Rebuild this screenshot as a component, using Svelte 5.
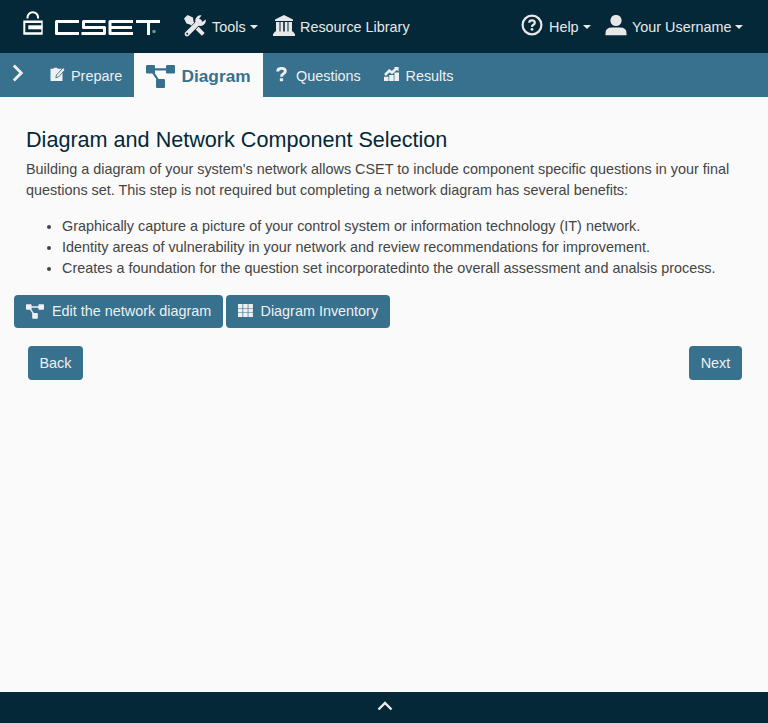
<script>
  const benefits = [
    'Graphically capture a picture of your control system or information technology (IT) network.',
    'Identity areas of vulnerability in your network and review recommendations for improvement.',
    'Creates a foundation for the question set incorporatedinto the overall assessment and analsis process.'
  ];
</script>

{#snippet nodes(w, h)}
  <svg width={w} height={h} viewBox="0 0 29 23">
    <path d="M5 4.300H24M5 4.300L14 18" fill="none" stroke="currentColor" stroke-width="2.200" />
    <rect x="0" y="0" width="9" height="8.500" rx="1.200" />
    <rect x="20" y="0" width="9" height="8.500" rx="1.200" />
    <rect x="10" y="14" width="9" height="9" rx="1.200" />
  </svg>
{/snippet}

<div class="app">
  <header>
    <a class="brand" href="#home" aria-label="CSET">
      <svg width="138" height="26" viewBox="0 0 138 26">
        <path d="M4.500 7.500V6.500a5.300 5.300 0 0 1 10.600 0V7.500" fill="none" stroke="#fff" stroke-width="2" />
        <path fill="#fff" fill-rule="evenodd" d="M.3 9.500h19.400v14.200H.3zM2.300 12v9.200h16V12z" />
        <path fill="#fff" d="M5.300 14.300h14v4h-14z" />
        <g fill="none" stroke="#fff" stroke-width="3" stroke-linejoin="round">
          <path d="M56 10.500H33.500V22.500H56" />
          <path d="M82.500 10.500H60.500V16.400H81.500V22.500H58.500" />
          <path d="M110 10.500H87V22.500H110M87 16.500H109" />
          <path d="M113 10.500H137M125.500 10.500V24" />
        </g>
        <circle cx="131" cy="20.500" r="1.700" fill="#7d909a" />
      </svg>
    </a>
    <a class="tools" href="#tools">
      <svg width="22" height="22" viewBox="0 0 22 22">
        <path d="M0 3.500L3.500 0L9 2.500L9.500 6.500L13 10L9.500 13L6 9.500L2.500 8.500z" />
        <path d="M13 13L19.300 19.300" stroke="currentColor" stroke-width="4" />
        <path d="M5 17L14.500 7.500" stroke="#042838" stroke-width="6" />
        <path d="M3 19L15.500 6.500" stroke="currentColor" stroke-width="4.600" stroke-linecap="round" />
        <path d="M17.500.4A5.300 5.300 0 1 0 21.700 4.500L18.500 6.800L15.500 6.300L15.200 3.500z" />
        <circle cx="3.200" cy="18.800" r="1" fill="#042838" />
      </svg>
      <span>Tools</span><i class="caret"></i>
    </a>
    <a class="library" href="#library">
      <svg width="22" height="21" viewBox="0 0 22 21">
        <path d="M11 0L20 4.500V6H2V4.500zM3 7h3.500v9.500H3zM7.500 7h2.700v9.500H7.500zM11.800 7h2.700v9.500h-2.700zM15.500 7H19v9.500h-3.500zM2 16.500h18l2 2.800V21H0v-1.700z" />
      </svg>
      <span>Resource Library</span>
    </a>
    <a class="help" href="#help">
      <svg width="22" height="22" viewBox="0 0 22 22">
        <circle cx="11" cy="11" r="9.400" fill="none" stroke="currentColor" stroke-width="2.200" />
        <path d="M8.200 8.800Q8.200 6.300 11 6.300T13.800 8.700Q13.800 10 12.400 10.800Q11 11.500 11 13" fill="none" stroke="currentColor" stroke-width="2.200" />
        <circle cx="11" cy="15.300" r="1.400" />
      </svg>
      <span>Help</span><i class="caret"></i>
    </a>
    <a class="user" href="#account">
      <svg width="22" height="21" viewBox="0 0 22 21">
        <circle cx="11" cy="5.500" r="5.600" />
        <path d="M.5 20.300V18Q.5 12.500 7 12.500H15Q21.500 12.500 21.500 18V20.300z" />
      </svg>
      <span>Your Username</span><i class="caret"></i>
    </a>
  </header>

  <nav>
    <button class="expand" aria-label="Expand">
      <svg width="12" height="18" viewBox="0 0 12 18"><path d="M1.800 1.500L9.300 9L1.800 16.500" fill="none" stroke="currentColor" stroke-width="2.800" /></svg>
    </button>
    <a class="prepare" href="#prepare">
      <svg width="15" height="15" viewBox="0 0 15 15">
        <path d="M.5 1.800h3L4 .8h3.200l.5 1h4.800V14H.5z" />
        <path d="M13 .8L6.500 8L5.800 10.700L8.500 10L14.600 3.200" fill="#f0f0f0" stroke="#37718e" stroke-width=".9" />
      </svg>
      <span>Prepare</span>
    </a>
    <a class="diagram" href="#diagram">{@render nodes(29, 23)}<span>Diagram</span></a>
    <a class="questions" href="#questions">
      <svg width="11" height="15" viewBox="0 0 11 15">
        <path d="M1.700 4.600Q1.700 1.400 5.500 1.400T9.300 4.200Q9.300 5.800 7.500 6.800Q5.500 7.900 5.500 9.800" fill="none" stroke="currentColor" stroke-width="2.900" />
        <rect x="3.800" y="11.200" width="3.300" height="3" rx=".6" />
      </svg>
      <span>Questions</span>
    </a>
    <a class="results" href="#results">
      <svg width="15" height="14" viewBox="0 0 15 14">
        <path d="M0 9.800h4.500V14H0zM5.200 8h4.500v6H5.200zM10.400 5.500H15V14h-4.600z" />
        <path d="M1 8L5.300 3.600L8 5.500L12.500 1.500" fill="none" stroke="currentColor" stroke-width="2.600" />
        <path d="M9.800 0H14.600V4.600z" />
      </svg>
      <span>Results</span>
    </a>
  </nav>

  <main>
    <h1>Diagram and Network Component Selection</h1>
    <p>Building a diagram of your system's network allows CSET to include component specific questions in your final questions set. This step is not required but completing a network diagram has several benefits:</p>
    <ul>
      {#each benefits as benefit}<li>{benefit}</li>{/each}
    </ul>
    <div class="actions">
      <button class="edit">{@render nodes(18, 15)}<span>Edit the network diagram</span></button>
      <button class="inventory">
        <svg width="15" height="13" viewBox="0 0 15 13">
          <path d="M0 0h4.500v3.900H0zM5.200 0h4.500v3.900H5.200zM10.400 0h4.500v3.900h-4.500zM0 4.500h4.500v3.900H0zM5.200 4.500h4.500v3.900H5.200zM10.400 4.500h4.500v3.900h-4.500zM0 9h4.500v3.900H0zM5.200 9h4.500v3.900H5.200zM10.400 9h4.500v3.900h-4.500z" />
        </svg>
        <span>Diagram Inventory</span>
      </button>
    </div>
    <div class="pager"><button class="back">Back</button><button class="next">Next</button></div>
  </main>

  <footer>
    <svg width="16" height="10" viewBox="0 0 16 10"><path d="M1.500 8.500L8 2L14.500 8.500" fill="none" stroke="#ececec" stroke-width="2.400" /></svg>
  </footer>
</div>

<style>
  :global(body) { margin: 0; }
  .app {
    height: 723px;
    display: flex;
    flex-direction: column;
    background: #fafafa;
    color: #444;
    font: 14.4px/21px "Liberation Sans", Arial, sans-serif;
  }
  svg { display: block; flex: none; fill: currentColor; }
  a { color: inherit; text-decoration: none; white-space: nowrap; display: flex; }
  button { font: inherit; white-space: nowrap; color: #f0f0f0; background: #37718e; border: 0; border-radius: 4px; }
  header {
    height: 53px;
    flex: none;
    display: flex;
    background: #042838;
    color: #e8e8e8;
  }
  header a { align-items: flex-start; }
  header svg { margin-top: 15px; }
  header span { margin-top: 17px; }
  .brand { margin-left: 23px; width: 161px; }
  .brand svg { margin-top: 11px; }
  .tools { width: 89px; }
  .tools span { margin-left: 6px; }
  .library span { margin-left: 5px; }
  .help { margin-left: auto; width: 84px; }
  .help svg { margin-top: 14px; }
  .help span { margin-left: 6px; }
  .user { width: 163px; }
  .user span { margin-left: 5px; }
  .caret {
    margin: 25px 0 0 4px;
    border: 4px solid transparent;
    border-top-color: currentColor;
    border-bottom: 0;
  }
  nav {
    height: 44px;
    flex: none;
    display: flex;
    background: #37718e;
    color: #f0f0f0;
  }
  nav a { box-sizing: border-box; align-items: flex-start; }
  nav span { margin-top: 13px; }
  .expand { box-sizing: border-box; width: 50px; padding: 11px 0 0 12px; display: flex; align-items: flex-start; }
  .prepare { width: 84px; }
  .prepare svg { margin-top: 14px; }
  .prepare span { margin-left: 6px; }
  .diagram { width: 129px; padding-left: 12px; background: #fafafa; color: #37718e; font-size: 17.28px; font-weight: bold; }
  .diagram svg { margin-top: 12px; }
  .diagram span { margin-left: 6.500px; }
  .questions { width: 121px; padding-left: 13px; }
  .questions svg { margin-top: 14px; }
  .questions span { margin-left: 9px; }
  .results svg { margin-top: 14px; }
  .results span { margin-left: 6.500px; }
  main { flex: 1; padding: 30px 14px 0; }
  h1 { margin: 0 12px 7px; color: #042838; font-size: 21.6px; font-weight: 400; line-height: 25px; }
  p { margin: 0 12px 15px; }
  ul { margin: 0 0 16px 12px; padding-left: 36px; }
  .actions { display: flex; gap: 3px; }
  .actions button { height: 33px; display: flex; align-items: flex-start; padding: 6px 0 0 12px; }
  .actions svg { margin-top: 3px; }
  .edit { width: 209px; }
  .edit span { margin-left: 8px; }
  .inventory { width: 164px; }
  .inventory span { margin-left: 7.500px; }
  .pager { display: flex; justify-content: space-between; margin: 18px 12px 0 14px; }
  .pager button { height: 34px; padding: 0; }
  .back { width: 55px; }
  .next { width: 53px; }
  footer { height: 31px; flex: none; display: flex; justify-content: center; background: #042838; }
  footer svg { margin: 9px 0 0 2px; }
</style>
